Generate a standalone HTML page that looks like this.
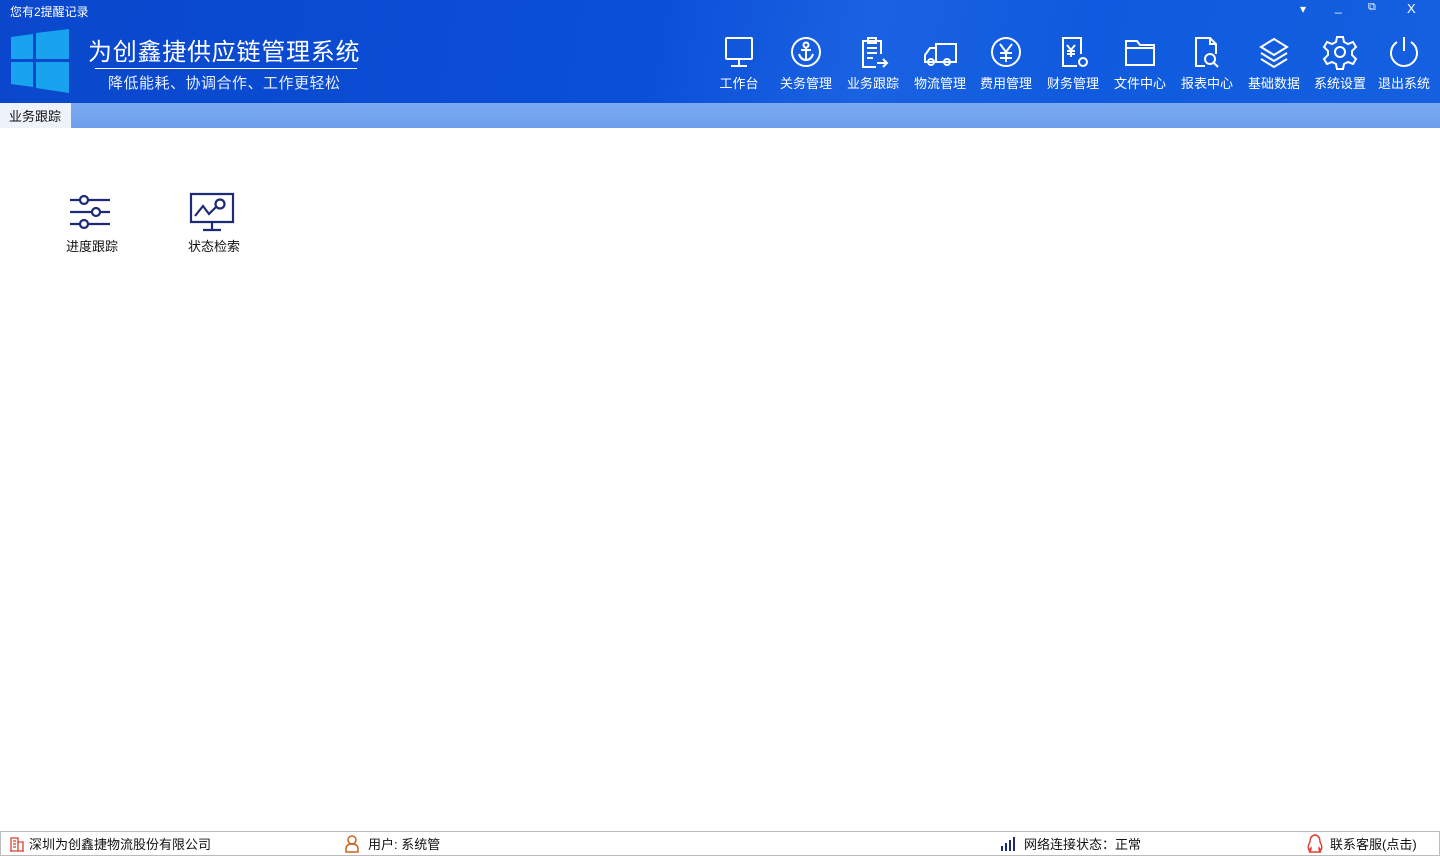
<!DOCTYPE html>
<html><head><meta charset="utf-8"><style>
*{margin:0;padding:0;box-sizing:border-box}
body{width:1440px;height:856px;overflow:hidden;background:#fff;font-family:"Liberation Sans","Noto Sans CJK SC",sans-serif;position:relative}
.hdr{position:absolute;left:0;top:0;width:1440px;height:103px;background:linear-gradient(100deg,#0a47cc 0%,#0b4fd8 45%,#1a62e2 60%,#0f5ade 75%,#1560e0 100%)}
.t{position:absolute;color:#fff;white-space:nowrap}
.nav{position:absolute;top:34px;width:66px;text-align:center;color:#fff;font-size:13px;line-height:16px}
.nav svg{display:block;margin:0 auto 6px;width:36px;height:36px;fill:none;stroke:#fff;stroke-width:2}
.tab{position:absolute;top:103px;left:0;width:1440px;height:25px;background:linear-gradient(#7aaaf0,#6d9fee)}
.sb{position:absolute;left:0;top:831px;width:1440px;height:25px;border:1px solid #bbb;font-size:13px;color:#111}
.sb span{position:absolute;top:2px;white-space:nowrap}
</style></head><body>
<div class="hdr">
<div class="t" style="left:10px;top:3px;font-size:12px">您有2提醒记录</div>
<svg style="position:absolute;left:11px;top:29px" width="58" height="64"><path fill="#19a3ee" d="M0 8 L22 5 L22 30 L0 30Z M25 4 L58 0 L58 30 L25 30Z M0 33 L22 33 L22 58 L0 55Z M25 33 L58 33 L58 64 L25 59Z"/></svg>
<div class="t" style="left:88px;top:32px;font-size:24px;letter-spacing:0.75px">为创鑫捷供应链管理系统</div>
<div style="position:absolute;left:95px;top:68px;width:262px;height:1px;background:#fff"></div>
<div class="t" style="left:108px;top:72px;font-size:15px;color:#e6eeff;letter-spacing:0.5px">降低能耗、协调合作、工作更轻松</div>
<div class="t" style="left:1300px;top:2px;font-size:12px">▾</div>
<div class="t" style="left:1335px;top:0px;font-size:12px">_</div>
<div class="t" style="left:1368px;top:1px;font-size:11px">⧉</div>
<div class="t" style="left:1407px;top:1px;font-size:13px">X</div>
<div class="nav" style="left:706px"><svg viewBox="0 0 36 36"><rect x="5" y="4" width="26" height="21" rx="1"/><path d="M18 25v6M10 32h16"/></svg>工作台</div>
<div class="nav" style="left:773px"><svg viewBox="0 0 36 36"><circle cx="18" cy="18" r="14"/><circle cx="18" cy="11" r="2.5"/><path d="M18 13.5v13M11 20q2 6 7 6q5 0 7-6M13 16h10"/></svg>关务管理</div>
<div class="nav" style="left:840px"><svg viewBox="0 0 36 36"><path d="M26 20V7H8v26h13"/><rect x="13" y="4" width="8" height="5"/><path d="M12 14h10M12 19h10M12 24h6M22 29h10M28 25l4 4l-4 4"/></svg>业务跟踪</div>
<div class="nav" style="left:907px"><svg viewBox="0 0 36 36"><path d="M14 10h20v18H14zM14 14H8l-5 7v7h11"/><circle cx="9" cy="28" r="3"/><circle cx="25" cy="28" r="3"/></svg>物流管理</div>
<div class="nav" style="left:973px"><svg viewBox="0 0 36 36"><circle cx="18" cy="18" r="14"/><path d="M12 10l6 8l6-8M18 18v10M12 19h12M12 24h12"/></svg>费用管理</div>
<div class="nav" style="left:1040px"><svg viewBox="0 0 36 36"><path d="M22 32H8V4h18v16"/><path d="M12 11l4 5l4-5M16 16v7M12 17h8M12 20h8"/><circle cx="28" cy="28" r="4"/></svg>财务管理</div>
<div class="nav" style="left:1107px"><svg viewBox="0 0 36 36"><path d="M4 7h11l3 4h14v20H4zM4 14h28"/></svg>文件中心</div>
<div class="nav" style="left:1174px"><svg viewBox="0 0 36 36"><path d="M16 32H7V4h14l6 6v10M21 4v6h6"/><circle cx="21" cy="25" r="5"/><path d="M25 29l4 4"/></svg>报表中心</div>
<div class="nav" style="left:1241px"><svg viewBox="0 0 36 36"><path d="M18 5l13 8l-13 8l-13-8zM5 19l13 8l13-8M5 25l13 8l13-8"/></svg>基础数据</div>
<div class="nav" style="left:1307px"><svg viewBox="0 0 36 36"><path d="M15 3h6l1 5l4 2l5-2l3 5l-4 4v4l4 4l-3 5l-5-2l-4 2l-1 5h-6l-1-5l-4-2l-5 2l-3-5l4-4v-4l-4-4l3-5l5 2l4-2z"/><circle cx="18" cy="18" r="5"/></svg>系统设置</div>
<div class="nav" style="left:1371px"><svg viewBox="0 0 36 36"><path d="M18 3v14M11 8a13 13 0 1 0 14 0"/></svg>退出系统</div>
</div>
<div class="tab"><div style="position:absolute;left:0;top:0;width:71px;height:25px;background:#eef3fb;font-size:13px;color:#111;padding:3px 0 0 9px">业务跟踪</div></div>
<svg style="position:absolute;left:68px;top:194px" width="44" height="36" fill="none" stroke="#1c2a78" stroke-width="2.2"><path d="M2 6h10M20 6h22M2 18h22M32 18h10M2 30h10M20 30h22"/><circle cx="16" cy="6" r="4"/><circle cx="28" cy="18" r="4"/><circle cx="16" cy="30" r="4"/></svg>
<div style="position:absolute;left:66px;top:236px;font-size:13px;color:#111">进度跟踪</div>
<svg style="position:absolute;left:189px;top:192px" width="46" height="40" fill="none" stroke="#1c2a78" stroke-width="2.2"><path d="M2 2h42v28H2zM23 30v8M14 38h18M6 24l8-10l6 8l7-7"/><circle cx="31" cy="12" r="4.5"/></svg>
<div style="position:absolute;left:188px;top:236px;font-size:13px;color:#111">状态检索</div>
<div class="sb">
<svg style="position:absolute;left:8px;top:4px" width="16" height="16" fill="none" stroke="#d9412c" stroke-width="1.3"><path d="M1 15h14M2 15V2h7v13M9 6h5v9M4 5h3M4 8h3M4 11h3"/></svg>
<span style="left:28px">深圳为创鑫捷物流股份有限公司</span>
<svg style="position:absolute;left:343px;top:3px" width="16" height="18" fill="none" stroke="#c8641e" stroke-width="1.5"><circle cx="8" cy="5" r="4"/><path d="M2 17v-3q0-5 6-5q6 0 6 5v3z"/></svg>
<span style="left:367px">用户: 系统管</span>
<svg style="position:absolute;left:999px;top:5px" width="18" height="14" fill="#1c2a78"><rect x="1" y="9" width="2" height="5"/><rect x="5" y="6" width="2" height="8"/><rect x="9" y="3" width="2" height="11"/><rect x="13" y="0" width="2" height="14"/></svg>
<span style="left:1023px">网络连接状态：正常</span>
<svg style="position:absolute;left:1304px;top:2px" width="18" height="20" fill="none" stroke="#e03b2e" stroke-width="1.4"><path d="M9 1q6 0 6 7q3 5 1 8q-1-1-2-2q0 3 2 4h-12q2-1 2-4q-1 1-2 2q-2-3 1-8q0-7 6-7z"/></svg>
<span style="left:1329px">联系客服(点击)</span>
</div>
</body></html>
